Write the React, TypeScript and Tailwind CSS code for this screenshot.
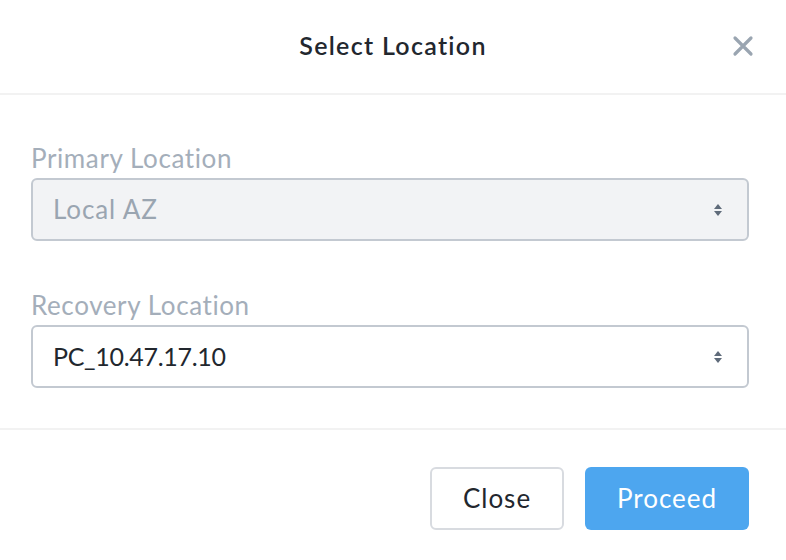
import React from 'react';

const Chevrons: React.FC = () => (
  <svg width="10" height="16" viewBox="0 0 10 16" className="shrink-0">
    <path d="M5 2 L9 7 H1 Z" fill="#5f6b7a" />
    <path d="M5 14 L9 9 H1 Z" fill="#5f6b7a" />
  </svg>
);

const App: React.FC = () => {
  return (
    <div className="w-[786px] h-[560px] bg-white font-['Lato','Open_Sans',sans-serif] text-[#22272e] tracking-[0.6px]">
      {/* Header */}
      <div className="relative h-[95px] flex items-center justify-center border-b-2 border-[#f2f2f2]">
        <h1 className="text-[25px] font-semibold tracking-[1.3px] -mt-[2px]">Select Location</h1>
        <button className="absolute right-[31px] top-[34px] text-[#9aa5b1]">
          <svg width="24" height="24" viewBox="0 0 24 24">
            <path d="M4 4 L20 20 M20 4 L4 20" stroke="currentColor" strokeWidth="3.2" strokeLinecap="round" />
          </svg>
        </button>
      </div>

      {/* Body */}
      <div className="pl-[31px] pr-[37px] pt-[48px] pb-[40px] border-b-2 border-[#f2f2f2]">
        <label className="block text-[26px] leading-[31px] text-[#a4aeba] mb-[4px]">Primary Location</label>
        <div className="h-[63px] flex items-center justify-between pl-[20px] pr-[24px] rounded-[6px] border-2 border-[#c3c9d1] bg-[#f2f3f5]">
          <span className="text-[26px] tracking-[0.9px] text-[#9aa5b1]">Local AZ</span>
          <Chevrons />
        </div>

        <label className="block mt-[49px] text-[26px] leading-[31px] text-[#a4aeba] mb-[4px]">Recovery Location</label>
        <div className="h-[63px] flex items-center justify-between pl-[20px] pr-[24px] rounded-[6px] border-2 border-[#c3c9d1] bg-white">
          <span className="text-[25px] tracking-[-0.3px] text-[#22272e]">PC_10.47.17.10</span>
          <Chevrons />
        </div>
      </div>

      {/* Footer */}
      <div className="flex justify-end gap-[21px] px-[37px] pt-[37px]">
        <button className="w-[134px] h-[63px] rounded-[6px] border-2 border-[#d8dbe0] bg-white text-[26px] tracking-[1px] text-[#22272e]">
          Close
        </button>
        <button className="w-[164px] h-[63px] rounded-[6px] bg-[#4da6ef] text-[26px] tracking-[1px] text-white">
          Proceed
        </button>
      </div>
    </div>
  );
};

export default App;
